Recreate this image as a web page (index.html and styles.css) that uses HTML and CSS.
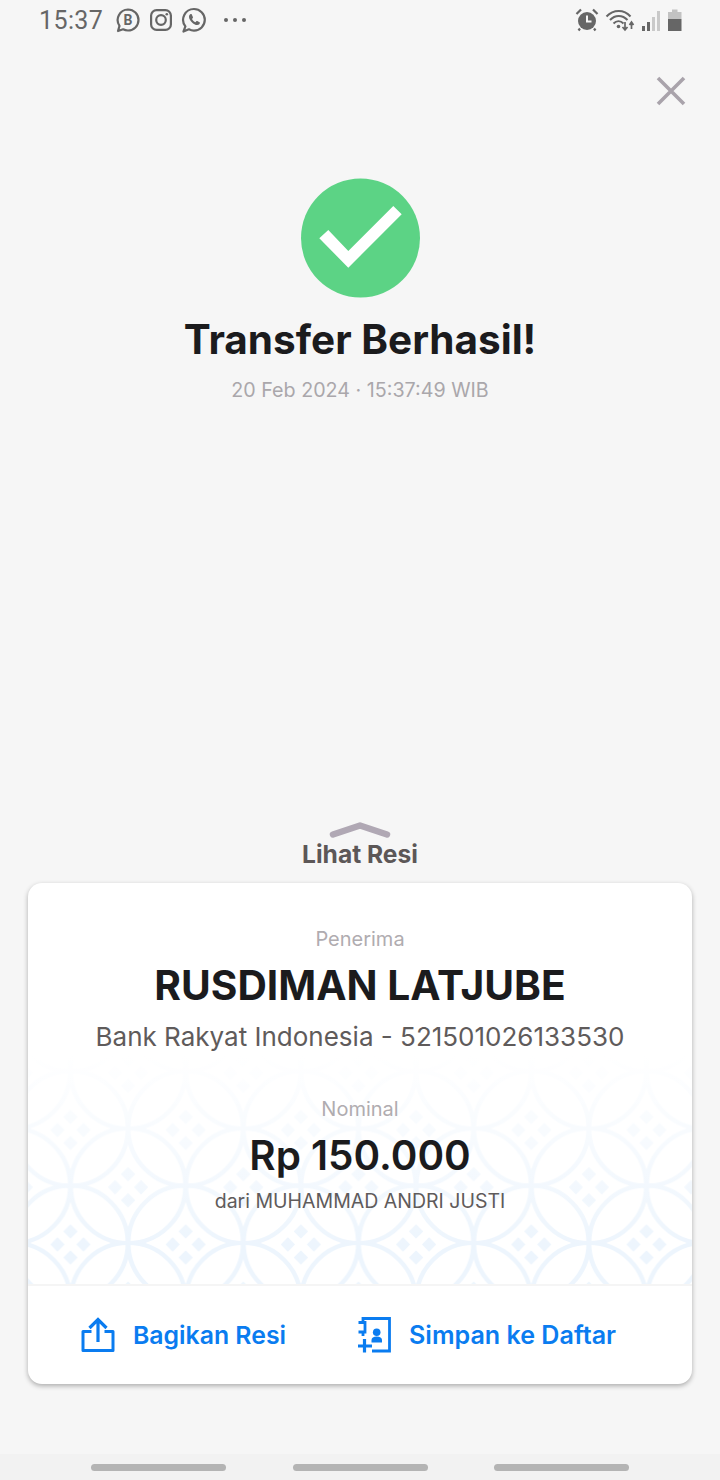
FILE: index.html
```html
<!DOCTYPE html>
<html lang="id">
<head>
    <meta charset="UTF-8">
    <title>Transfer Berhasil</title>
    <link rel="stylesheet" href="styles.css">
</head>
<body>
<div class="screen">
    <div class="statusbar">
        <div class="statusbar__left">
            <span class="statusbar__time">15:37</span>
            <svg class="statusbar__icon" width="26" height="26" viewBox="0 0 26 26">
                <path d="M13 2.500a10.500 10.500 0 0 1 0 21c-1.800 0-3.400-.4-4.900-1.200L3 24l1.500-5.100A10.500 10.500 0 0 1 13 2.500z" fill="none" stroke="#666" stroke-width="2.200" stroke-linejoin="round"/>
                <text x="13" y="18" text-anchor="middle" class="statusbar__b">B</text>
            </svg>
            <svg class="statusbar__icon" width="24" height="24" viewBox="0 0 24 24">
                <rect x="2.100" y="2.100" width="19.800" height="19.800" rx="5.500" fill="none" stroke="#666" stroke-width="2.200"/>
                <circle cx="12" cy="12" r="4.800" fill="none" stroke="#666" stroke-width="2.200"/>
                <circle cx="17.800" cy="6.200" r="1.300" fill="#666"/>
            </svg>
            <svg class="statusbar__icon" width="26" height="26" viewBox="0 0 26 26">
                <path d="M13 2a10.800 10.800 0 0 1 0 21.600c-1.800 0-3.600-.5-5.100-1.300L2.500 24.500l1.900-5.100A10.800 10.800 0 0 1 13 2z" fill="none" stroke="#666" stroke-width="2.200" stroke-linejoin="round"/>
                <path d="M9.800 7c-.9.300-1.800 1.300-1.800 2.700 0 3.600 4.800 8.400 8.200 8.400 1.500 0 2.500-1 2.700-2 .1-.4-.1-.7-.4-.9l-2.200-1.100c-.4-.2-.7-.1-1 .2l-.8 1c-1.500-.6-2.800-1.900-3.500-3.400l.8-.9c.2-.3.3-.6.100-1L10.800 7.400c-.2-.4-.6-.5-1-.4z" fill="#666"/>
            </svg>
            <span class="statusbar__more">
                <i></i><i></i><i></i>
            </span>
        </div>
        <div class="statusbar__right">
            <svg width="24" height="24" viewBox="0 0 24 24">
                <circle cx="12" cy="13" r="9" fill="#666"/>
                <path d="M12 7.500V13.500H16.500" fill="none" stroke="#f6f6f6" stroke-width="2"/>
                <path d="M1.500 6L6 1.500M22.500 6L18 1.500M5 20.500L3.500 22.500M19 20.500L20.500 22.500" stroke="#666" stroke-width="2.200"/>
            </svg>
            <svg width="30" height="24" viewBox="0 0 30 24">
                <path d="M1.500 8.500C8.500 1 19 1 25.500 8.500M5 12C10 6.500 17.500 6.500 22.500 12M8.500 15.500C11.500 12.500 15.500 12.500 18.500 15.500" fill="none" stroke="#666" stroke-width="2"/>
                <circle cx="13.500" cy="18.500" r="1.800" fill="#666"/>
                <path d="M20 14V21.500M17.500 19L20 22L22.500 19M26.500 21V14.500M24.500 17L26.500 14L28.500 17" fill="none" stroke="#666" stroke-width="1.700"/>
            </svg>
            <svg width="20" height="24" viewBox="0 0 20 24">
                <rect x="1" y="18" width="3" height="5" fill="#666"/>
                <rect x="6" y="14" width="3" height="9" fill="#666"/>
                <rect x="11" y="9" width="3" height="14" fill="#c9c9c9"/>
                <rect x="16" y="3" width="3" height="20" fill="#c9c9c9"/>
            </svg>
            <svg width="16" height="24" viewBox="0 0 16 24">
                <path d="M5 1.500H10.500V4H14.500V11H1V4H5z" fill="#c2c2c2"/>
                <rect x="1" y="11" width="13.500" height="12" fill="#666"/>
            </svg>
        </div>
    </div>

    <div class="topbar">
        <svg width="32" height="32" viewBox="0 0 32 32">
            <path d="M3 3L29 29M29 3L3 29" stroke="#a9a3ab" stroke-width="3.600"/>
        </svg>
    </div>

    <div class="result">
        <svg class="result__check" width="120" height="120" viewBox="0 0 120 120">
            <circle cx="60.500" cy="60" r="59.500" fill="#5cd385"/>
            <path d="M19.300 60.300L28.300 52L48.300 73L93.300 28L101.700 36.300L48.300 89.700z" fill="#fff"/>
        </svg>
        <h1 class="result__title">Transfer Berhasil!</h1>
        <p class="result__date">20 Feb 2024 · 15:37:49 WIB</p>
    </div>

    <div class="spacer"></div>

    <div class="receipt-toggle">
        <svg width="64" height="20" viewBox="0 0 64 20">
            <path d="M5 14.500L32 5.500L59 14.500" fill="none" stroke="#b0a8b4" stroke-width="6.500" stroke-linecap="round" stroke-linejoin="round"/>
        </svg>
        <span class="receipt-toggle__label">Lihat Resi</span>
    </div>

    <div class="card">
        <div class="card__body">
            <svg class="card__pattern" width="664" height="240">
                <defs>
                    <g id="dots" fill="#edf5fd" stroke="#edf5fd" stroke-width="1" stroke-linejoin="round">
                        <path d="M0 -19.500L6.500 -13L0 -6.500L-6.500 -13z"/>
                        <path d="M0 6.500L6.500 13L0 19.500L-6.500 13z"/>
                        <path d="M-13 -6.500L-6.500 0L-13 6.500L-19.500 0z"/>
                        <path d="M13 -6.500L19.500 0L13 6.500L6.500 0z"/>
                    </g>
                    <pattern id="kawung" width="115.200" height="114.500" patternUnits="userSpaceOnUse" x="42.500" y="-30">
                        <g fill="none" stroke="#edf5fd" stroke-width="4.500">
                            <circle cx="0" cy="0" r="57.400"/>
                            <circle cx="115.200" cy="0" r="57.400"/>
                            <circle cx="0" cy="114.500" r="57.400"/>
                            <circle cx="115.200" cy="114.500" r="57.400"/>
                            <circle cx="57.600" cy="57.250" r="57.400"/>
                        </g>
                        <use href="#dots" x="0" y="1.500"/>
                        <use href="#dots" x="115.200" y="1.500"/>
                        <use href="#dots" x="0" y="116"/>
                        <use href="#dots" x="115.200" y="116"/>
                        <use href="#dots" x="57.600" y="58.750"/>
                    </pattern>
                    <linearGradient id="fade" x1="0" y1="0" x2="0" y2="1">
                        <stop offset="0.05" stop-color="#fff"/>
                        <stop offset="0.85" stop-color="#fff" stop-opacity="0"/>
                    </linearGradient>
                </defs>
                <rect width="664" height="240" fill="url(#kawung)"/>
                <rect width="664" height="240" fill="url(#fade)"/>
            </svg>
            <p class="card__label">Penerima</p>
            <p class="card__name">RUSDIMAN LATJUBE</p>
            <p class="card__bank">Bank Rakyat Indonesia - 521501026133530</p>
            <p class="card__label card__label--nominal">Nominal</p>
            <p class="card__amount">Rp 150.000</p>
            <p class="card__from">dari MUHAMMAD ANDRI JUSTI</p>
        </div>
        <div class="card__footer">
            <div class="card__action card__action--share">
                <svg width="34" height="36" viewBox="0 0 34 36">
                    <path d="M10.500 14.500H2V33.500H32V14.500H23.500" fill="none" stroke="#0a7cf0" stroke-width="3" stroke-linejoin="round"/>
                    <path d="M17 25V3M8.500 11L17 2.500L25.500 11" fill="none" stroke="#0a7cf0" stroke-width="3.200"/>
                </svg>
                <span>Bagikan Resi</span>
            </div>
            <div class="card__action card__action--save">
                <svg width="36" height="38" viewBox="0 0 36 38">
                    <path d="M7 6V2.500H33.500V35H16" fill="none" stroke="#0a7cf0" stroke-width="2.800"/>
                    <path d="M2.500 6.500H9V16H2.500M7 16V20" fill="none" stroke="#0a7cf0" stroke-width="2.800"/>
                    <path d="M2 30H16M8.500 23V36.500" fill="none" stroke="#0a7cf0" stroke-width="3.200"/>
                    <circle cx="20.700" cy="16.200" r="3.800" fill="#0a7cf0"/>
                    <path d="M15.500 26.500V24C15.500 22 17.500 20.500 20.700 20.500C23.900 20.500 26 22 26 24V26.500z" fill="#0a7cf0"/>
                </svg>
                <span class="card__action-text--save">Simpan ke Daftar</span>
            </div>
        </div>
    </div>

    <div class="navbar">
        <i></i><i></i><i></i>
    </div>
</div>
</body>
</html>
```

FILE: styles.css
```css
body, html {
    margin: 0;
    height: 100%;
    background-color: #f6f6f6;
}

body {
    font-family: Inter, "Noto Sans", sans-serif;
}

p, h1 {
    margin: 0;
}

.screen {
    width: 720px;
    height: 1480px;
    display: flex;
    flex-direction: column;
    overflow: hidden;
}

/* status bar */
.statusbar {
    height: 40px;
    display: flex;
    align-items: center;
    justify-content: space-between;
    padding: 0 37px 0 39px;
}

.statusbar__left,
.statusbar__right {
    display: flex;
    align-items: center;
}

.statusbar__time {
    font-family: Roboto, sans-serif;
    font-size: 25px;
    color: #666;
    letter-spacing: 0.4px;
    margin-right: 12px;
}

.statusbar__icon {
    margin-right: 8px;
}

.statusbar__b {
    font-family: Roboto, sans-serif;
    font-size: 14px;
    font-weight: 700;
    fill: #666;
}

.statusbar__more {
    display: flex;
    gap: 5px;
    margin-left: 9px;
}

.statusbar__more i {
    width: 4px;
    height: 4px;
    border-radius: 50%;
    background-color: #666;
}

.statusbar__right svg {
    margin-left: 6px;
}

/* close button */
.topbar {
    display: flex;
    justify-content: flex-end;
    padding: 35px 33px 0 0;
}

/* success block */
.result {
    display: flex;
    flex-direction: column;
    align-items: center;
    margin-top: 71px;
}

.result__check {
    display: block;
}

.result__title {
    font-size: 40.500px;
    font-weight: 700;
    line-height: 48px;
    color: #1b1b1d;
    margin-top: 18px;
}

.result__date {
    font-size: 19.700px;
    line-height: 24px;
    color: #aaa7ab;
    margin-top: 14px;
}

.spacer {
    flex: 1;
}

.receipt-toggle {
    display: flex;
    flex-direction: column;
    align-items: center;
    margin-bottom: 14px;
}

.receipt-toggle svg {
    display: block;
    margin-bottom: -1px;
}

.receipt-toggle__label {
    font-size: 24.600px;
    font-weight: 700;
    line-height: 30px;
    color: #5c5757;
}

/* receipt card */
.card {
    margin: 0 28px 70px;
    background-color: #fff;
    border-radius: 14px;
    box-shadow: 0 2px 5px rgba(0, 0, 0, 0.3);
    overflow: hidden;
}

.card__body {
    position: relative;
    height: 403px;
    padding-top: 44px;
    box-sizing: border-box;
    text-align: center;
    border-bottom: 2px solid #f5f5f5;
}

.card__pattern {
    position: absolute;
    left: 0;
    bottom: 0;
}

.card__body p {
    position: relative;
}

.card__label {
    font-size: 20px;
    line-height: 24px;
    color: #b0acb0;
}

.card__name {
    font-size: 40.700px;
    font-weight: 700;
    line-height: 48px;
    color: #1b1b1d;
    margin-top: 11px;
}

.card__bank {
    font-size: 26px;
    line-height: 32px;
    color: #5f5b5b;
    margin-top: 11px;
}

.card__label--nominal {
    margin-top: 44px;
}

.card__amount {
    font-size: 40.400px;
    font-weight: 600;
    line-height: 48px;
    color: #1b1b1d;
    margin-top: 11px;
}

.card__from {
    font-size: 19.500px;
    line-height: 24px;
    color: #5f5b5b;
    margin-top: 9px;
}

.card__footer {
    height: 98px;
    box-sizing: border-box;
    padding-left: 53px;
    display: flex;
    align-items: center;
}

.card__action {
    display: flex;
    align-items: center;
    font-size: 24.800px;
    font-weight: 600;
    color: #0a7cf0;
}

.card__action--share {
    gap: 18px;
    margin-right: 70px;
}

.card__action--save {
    gap: 17px;
}

.card__action-text--save {
    font-size: 25.100px;
}

/* bottom nav */
.navbar {
    height: 26px;
    box-sizing: border-box;
    background-color: #f2f2f2;
    display: flex;
    justify-content: center;
    align-items: center;
    gap: 66.500px;
}

.navbar i {
    width: 135px;
    height: 7px;
    border-radius: 4px;
    background-color: #b4b4b4;
}
```
